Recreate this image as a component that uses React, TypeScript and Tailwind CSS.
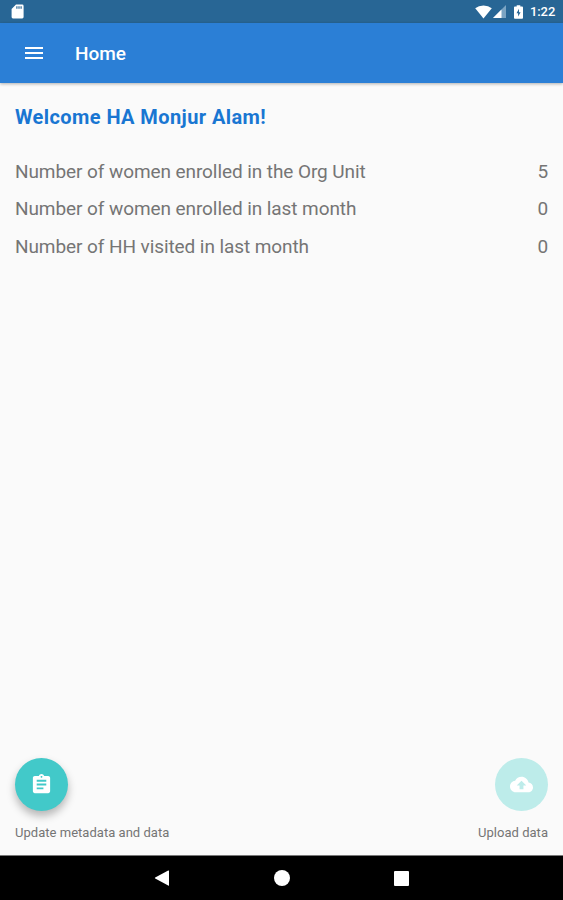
import type { ReactNode } from "react";

const stats = [
  { label: "Number of women enrolled in the Org Unit", value: 5 },
  { label: "Number of women enrolled in last month", value: 0 },
  { label: "Number of HH visited in last month", value: 0 },
];

function StatusBar() {
  return (
    <div className="flex h-[23px] shrink-0 items-center justify-between bg-[#286695] pl-[11px] pr-[7px] text-white">
      <svg className="h-[15px] w-[13px]" viewBox="0 0 13 15">
        <path
          fill="#fff"
          fillRule="evenodd"
          d="M5 .5h6.2q1.4 0 1.4 1.4v11.2q0 1.4-1.4 1.4H2Q.6 14.5.6 13.1V5zM5.3 2.3v2.5h1.2V2.3zm2.1 0v2.5h1.2V2.3zm2.1 0v2.5h1.2V2.3z"
        />
      </svg>
      <div className="flex items-center">
        <svg className="h-[14px] w-[17px]" viewBox="0 0 17 14">
          <path fill="#fff" d="M8.5 13.5.2 3.2Q3.7.5 8.5.5t8.3 2.7z" />
        </svg>
        <svg className="ml-px h-[13px] w-[13px]" viewBox="0 0 13 13">
          <path fill="#7ba4c3" d="M13 0v13H0z" />
          <path fill="#fff" d="M8.5 4.5V13H0z" />
        </svg>
        <svg className="ml-2 h-[14px] w-[9px]" viewBox="0 0 9 14">
          <path
            fill="#fff"
            fillRule="evenodd"
            d="M2.7.2h3.6v1.3h1.8q.9 0 .9.9v10.4q0 .9-.9.9H.9q-.9 0-.9-.9V2.4q0-.9.9-.9h1.8zM5 3.8 2.5 8.2h1.6v3.4l2.5-4.4H5z"
          />
        </svg>
        <span className="ml-[7px] w-[26px] pt-px text-[13px] leading-[22px] font-medium tracking-[-0.1px]">1:22</span>
      </div>
    </div>
  );
}

function AppBar() {
  return (
    <header className="z-10 flex h-[60px] shrink-0 items-center bg-[#2b7fd6] pl-[22px] text-white shadow-[0_1px_3px_rgba(0,0,0,0.3)]">
      <svg className="h-6 w-6" viewBox="0 0 24 24">
        <path fill="#fff" d="M3 18h18v-2H3zm0-5h18v-2H3zm0-7v2h18V6z" />
      </svg>
      <h1 className="ml-[29px] pt-[3px] text-[19px] font-medium">Home</h1>
    </header>
  );
}

function RoundAction({ label, className, align, children }: { label: string; className: string; align: string; children: ReactNode }) {
  return (
    <div className={`flex flex-col ${align}`}>
      <button className={`flex h-[53px] w-[53px] items-center justify-center rounded-full ${className}`}>
        <svg className="h-[23px] w-[23px]" viewBox="0 0 24 24" fill="#fff">
          {children}
        </svg>
      </button>
      <span className="mt-[13px] text-[13px] leading-[18px] tracking-[0.03px] text-[#757575]">{label}</span>
    </div>
  );
}

function NavBar() {
  return (
    <nav className="flex h-[45px] shrink-0 items-center justify-center gap-[104px] border-t border-[#777] bg-black">
      <svg className="h-4 w-4" viewBox="0 0 16 16">
        <path fill="#fff" d="M15 1v14.2q0 .8-.8.4L1.2 8.6q-.8-.5 0-1L14.2.5q.8-.4.8.5z" />
      </svg>
      <div className="h-4 w-4 rounded-full bg-white" />
      <div className="h-[15px] w-[15px] rounded-[1px] bg-white" />
    </nav>
  );
}

export default function App() {
  return (
    <div className="flex h-[900px] w-full flex-col overflow-hidden bg-[#fafafa] font-[Roboto,sans-serif]">
      <StatusBar />
      <AppBar />
      <main className="flex flex-1 flex-col px-[15px] pt-[20px]">
        <h2 className="text-[20px] leading-[28px] font-bold tracking-[0.41px] text-[#1976d2]">Welcome HA Monjur Alam!</h2>
        <dl className="mt-[22px]">
          {stats.map((s) => (
            <div key={s.label} className="flex h-[37.5px] items-center justify-between text-[19px] tracking-[-0.08px] text-[#757575]">
              <dt>{s.label}</dt>
              <dd>{s.value}</dd>
            </div>
          ))}
        </dl>
        <div className="mt-auto flex justify-between pb-[13px]">
          <RoundAction label="Update metadata and data" align="items-start" className="bg-[#42c9c9] shadow-[0_5px_8px_rgba(0,0,0,0.28)]">
            <path d="M19 3h-4.18C14.4 1.84 13.3 1 12 1s-2.4.84-2.82 2H5c-1.1 0-2 .9-2 2v14c0 1.1.9 2 2 2h14c1.1 0 2-.9 2-2V5c0-1.1-.9-2-2-2m-7 0c.55 0 1 .45 1 1s-.45 1-1 1-1-.45-1-1 .45-1 1-1m2 14H7v-2h7zm3-4H7v-2h10zm0-4H7V7h10z" />
          </RoundAction>
          <RoundAction label="Upload data" align="items-end" className="bg-[#bdecea]">
            <path d="M19.35 10.04C18.67 6.59 15.64 4 12 4 9.11 4 6.6 5.64 5.35 8.04 2.34 8.36 0 10.91 0 14c0 3.31 2.69 6 6 6h13c2.76 0 5-2.24 5-5 0-2.64-2.05-4.78-4.65-4.96M14 13v4h-4v-4H7l5-5 5 5z" />
          </RoundAction>
        </div>
      </main>
      <NavBar />
    </div>
  );
}
